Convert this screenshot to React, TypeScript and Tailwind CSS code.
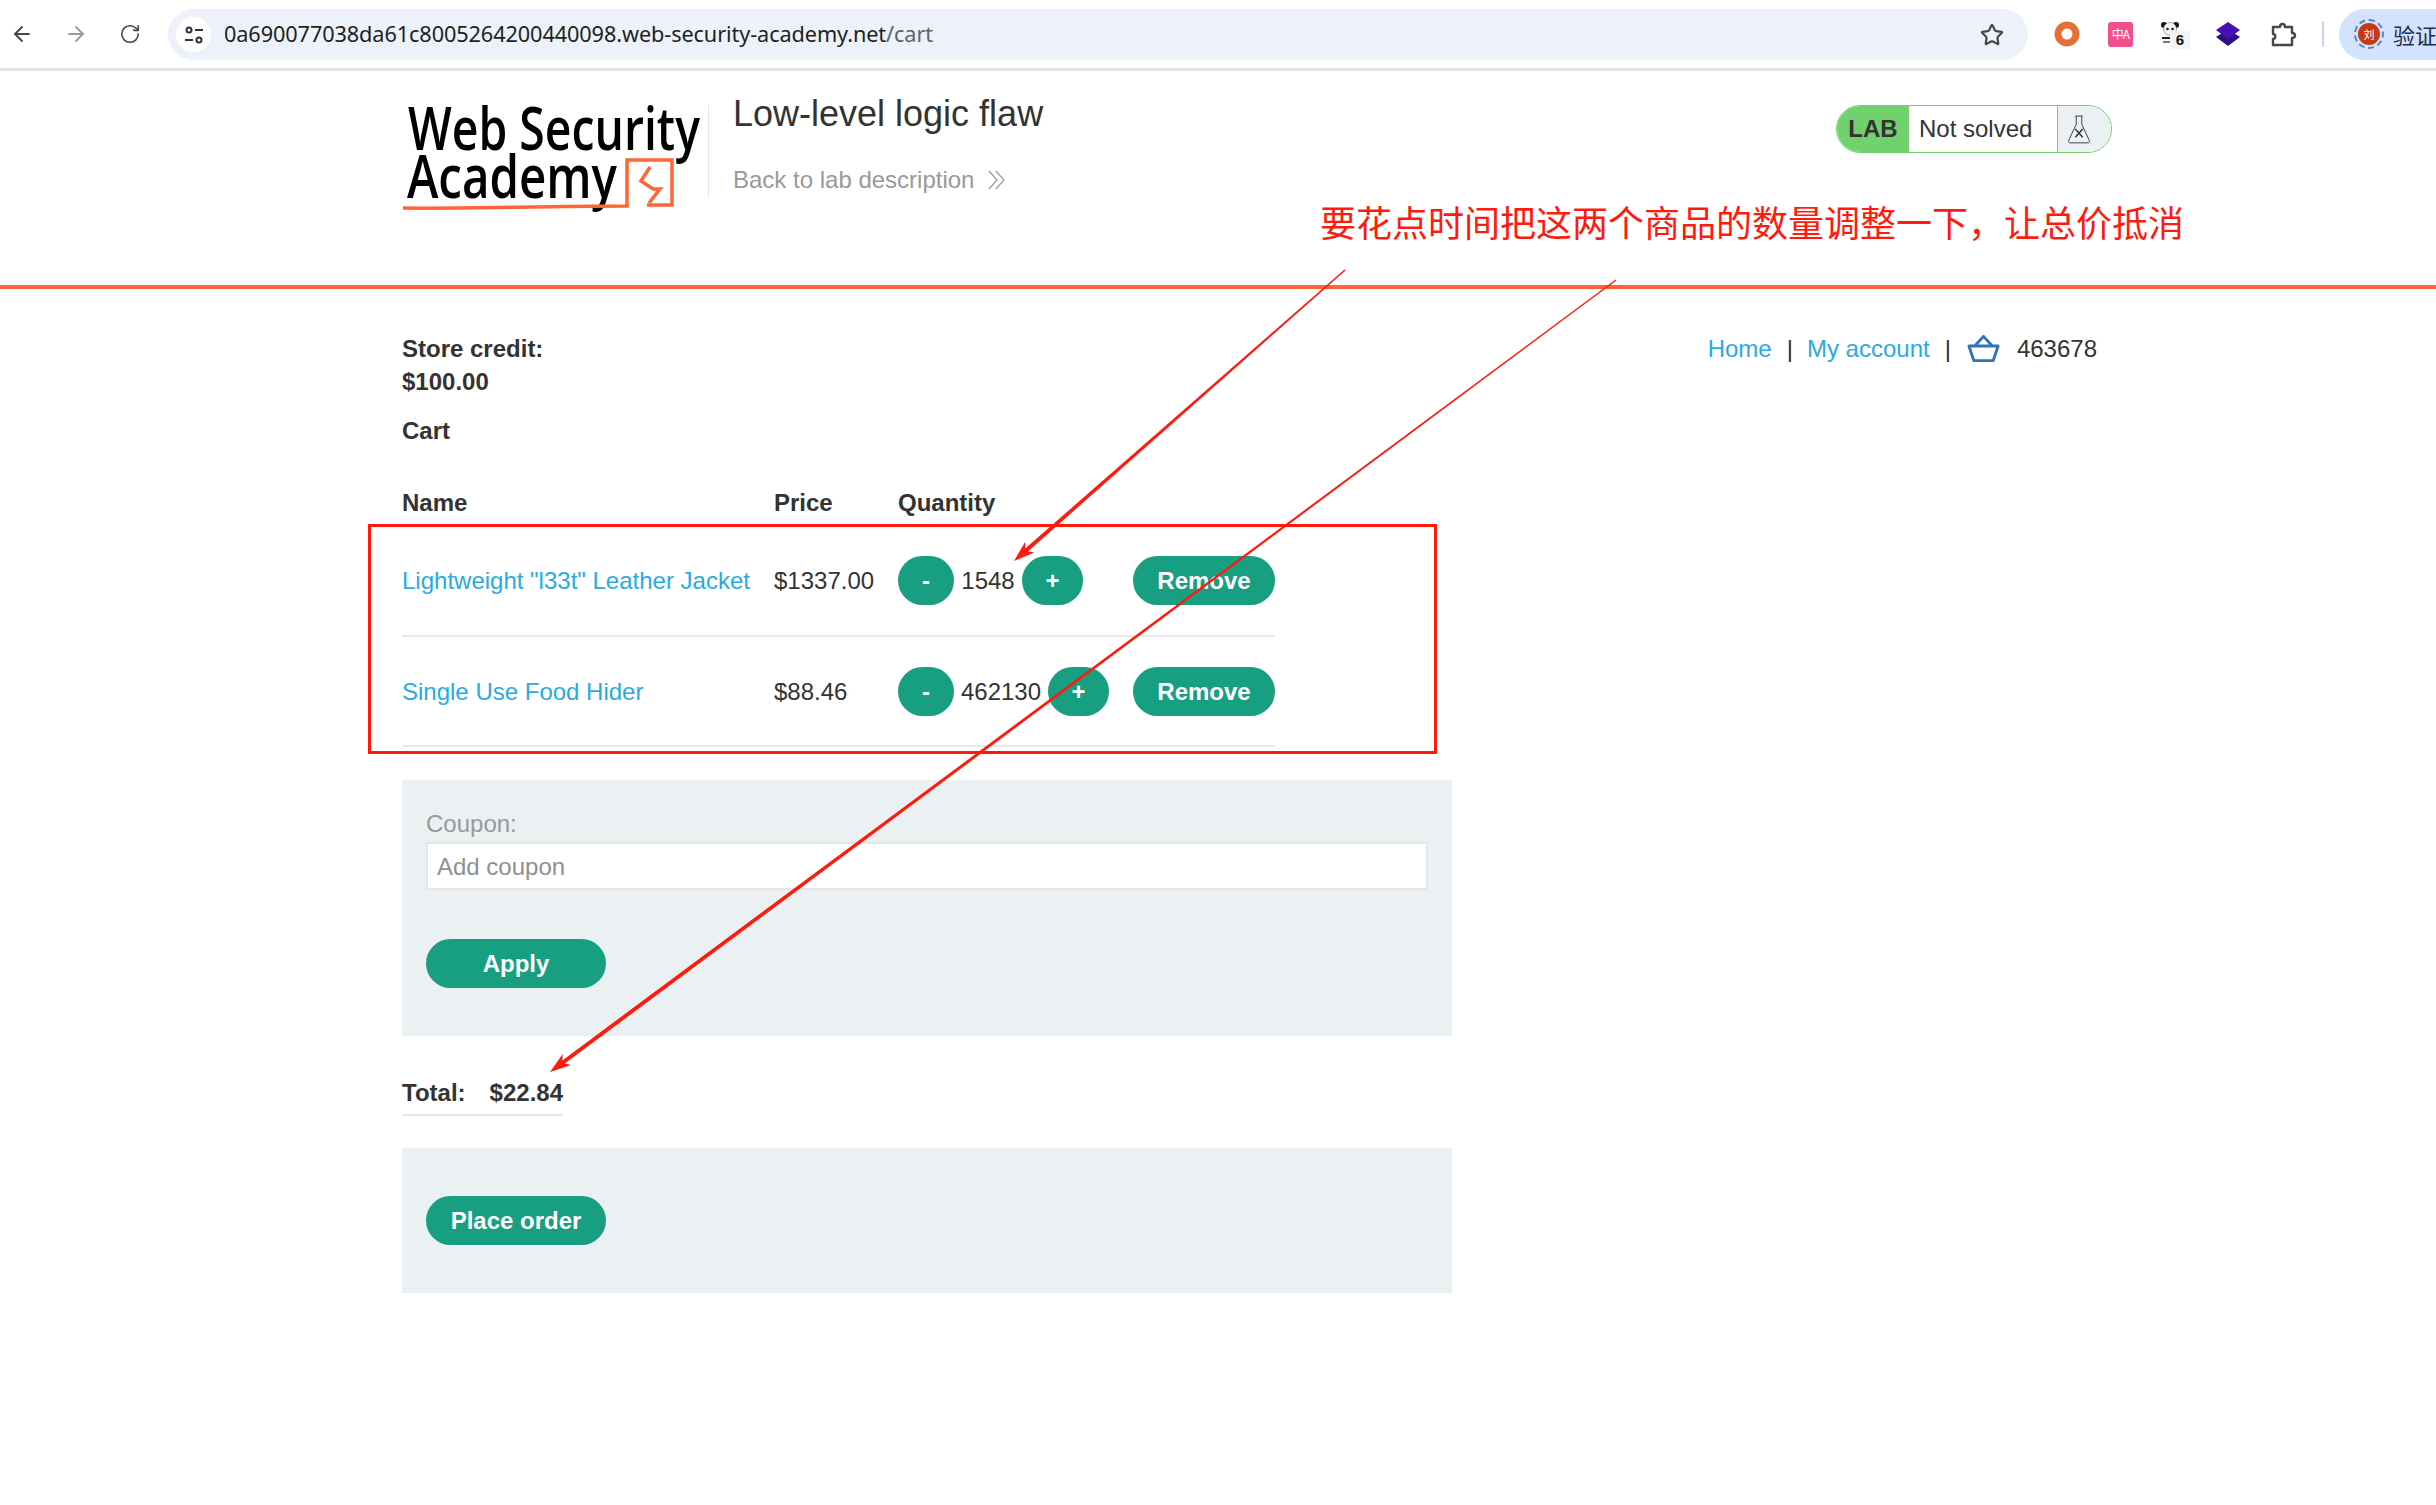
import React from "react";
import { ArrowLeft, ArrowRight, RotateCw, Star } from "lucide-react";

function Arrow({ x1, y1, x2, y2, w1, w2, head }: { x1: number; y1: number; x2: number; y2: number; w1: number; w2: number; head: number }) {
  const dx = x2 - x1;
  const dy = y2 - y1;
  const len = Math.hypot(dx, dy);
  const ux = dx / len;
  const uy = dy / len;
  const nx = -uy;
  const ny = ux;
  const bx = x2 - ux * head * 1.5;
  const by = y2 - uy * head * 1.5;
  const cx = x2 - ux * head * 1.2;
  const cy = y2 - uy * head * 1.2;
  const p = (a: number, b: number) => `${a.toFixed(1)},${b.toFixed(1)}`;
  const pts = [
    p(x1 + (nx * w1) / 2, y1 + (ny * w1) / 2),
    p(cx + (nx * w2) / 2, cy + (ny * w2) / 2),
    p(bx + (nx * head) / 2, by + (ny * head) / 2),
    p(x2, y2),
    p(bx - (nx * head) / 2, by - (ny * head) / 2),
    p(cx - (nx * w2) / 2, cy - (ny * w2) / 2),
    p(x1 - (nx * w1) / 2, y1 - (ny * w1) / 2),
  ].join(" ");
  return <polygon points={pts} fill="#ff1a0d" />;
}

function Pill({ className, children }: { className: string; children: React.ReactNode }) {
  return (
    <span className={`flex h-[49px] items-center justify-center rounded-[25px] bg-[#189e80] font-bold text-white ${className}`}>
      {children}
    </span>
  );
}

function BrowserBar() {
  return (
    <div className="flex h-[71px] items-start border-b-[3px] border-[#e3e3e3] bg-white">
      <div className="flex h-[68px] items-center pl-[10px]">
        <ArrowLeft className="h-[24px] w-[24px] text-[#474747]" strokeWidth={1.8} />
        <ArrowRight className="ml-[30px] h-[24px] w-[24px] text-[#9a9a9a]" strokeWidth={1.8} />
        <RotateCw className="ml-[31px] h-[22px] w-[22px] text-[#474747]" strokeWidth={1.8} />
      </div>
      <div className="ml-[27px] mt-[9px] flex h-[51px] w-[1860px] shrink-0 items-center rounded-full bg-[#ecf1fa] pl-[8px] pr-[24px]">
        <span className="flex h-[35px] w-[35px] items-center justify-center rounded-full bg-white">
          <svg width="20" height="20" viewBox="0 0 20 20" fill="none" stroke="#333" strokeWidth="2">
            <circle cx="5" cy="5" r="2.5" />
            <path d="M11 5h8M1 15h8" />
            <circle cx="15" cy="15" r="2.5" />
          </svg>
        </span>
        <span className="ml-[13px] flex-1 font-['Noto_Sans'] text-[21.7px] tracking-[-0.1px] text-[#1f1f1f]">
          0a690077038da61c8005264200440098.web-security-academy.net<span className="text-[#5f6368]">/cart</span>
        </span>
        <Star className="h-[24px] w-[24px] text-[#474747]" strokeWidth={2.2} />
      </div>
      <div className="flex h-[68px] flex-1 items-center">
        <svg className="ml-[26px]" width="26" height="26" viewBox="0 0 26 26">
          <circle cx="13" cy="13" r="9" fill="none" stroke="#e46f37" strokeWidth="7" />
        </svg>
        <span className="ml-[28px] flex h-[25px] w-[25px] items-center justify-center rounded-[3px] bg-[#f14f8e] font-['Noto_Sans_CJK_SC'] text-[12px] leading-none tracking-[-1px] text-white">
          中A
        </span>
        <span className="relative ml-[28px] h-[26px] w-[26px]">
          <svg width="18" height="22" viewBox="0 0 18 22" className="mt-[1px]">
            <circle cx="3" cy="3" r="3" fill="#111" />
            <circle cx="15" cy="3" r="3" fill="#111" />
            <circle cx="9" cy="7" r="6.5" fill="#f3f3f3" stroke="#555" strokeWidth="0.5" />
            <circle cx="6.5" cy="7" r="1.3" fill="#222" />
            <circle cx="11.5" cy="7" r="1.3" fill="#222" />
            <rect x="1" y="15" width="16" height="2" fill="#222" />
            <rect x="2" y="19" width="14" height="2" fill="#777" />
          </svg>
          <span className="absolute left-[9px] top-[10px] flex h-[18px] w-[20px] items-center justify-center rounded-[3px] bg-[#f3f3f3] text-[15px] font-bold text-[#111]">
            6
          </span>
        </span>
        <svg className="ml-[28px]" width="26" height="26" viewBox="0 0 26 26">
          <polygon points="13,8 25,16 13,25 1,16" fill="#2c0f80" />
          <polygon points="13,1 25,9 13,18 1,9" fill="#4a0fb0" />
        </svg>
        <svg className="ml-[30px]" width="26" height="26" viewBox="0 0 26 26" fill="none" stroke="#474747" strokeWidth="2.4" strokeLinejoin="round">
          <path d="M2 6h7c0-4 5-4 5 0h7v6c4 0 4 5 0 5v7H2v-6c3 0 3-5 0-5z" />
        </svg>
        <span className="ml-[25px] h-[26px] w-[2px] bg-[#c7d7f3]" />
        <div className="ml-[15px] flex h-[51px] min-w-0 flex-1 items-center overflow-hidden rounded-l-full bg-[#d3e3fd] pl-[15px]">
          <span className="flex h-[30px] w-[30px] shrink-0 items-center justify-center rounded-full border-2 border-dashed border-[#5d81b8] p-[2px]">
            <span className="flex h-[22px] w-[22px] items-center justify-center rounded-full bg-[#c53a12] font-['Noto_Sans_CJK_SC'] text-[11px] text-white">
              刘
            </span>
          </span>
          <span className="ml-[9px] whitespace-nowrap font-['Noto_Sans_CJK_SC'] text-[22px] text-[#1f2d4d]">验证身份</span>
        </div>
      </div>
    </div>
  );
}

function Logo() {
  return (
    <svg width="310" height="112" viewBox="0 0 310 112" className="shrink-0">
      <text x="8" y="46" fontFamily="'Open Sans'" fontWeight="600" fontSize="59" textLength="292" lengthAdjust="spacingAndGlyphs" fill="#000">
        Web Security
      </text>
      <text x="7" y="94" fontFamily="'Open Sans'" fontWeight="600" fontSize="59" textLength="210" lengthAdjust="spacingAndGlyphs" fill="#000">
        Academy
      </text>
      <path d="M3 104c60 1 140-2 224-2V56h45v45h-25" fill="none" stroke="#ff6633" strokeWidth="3.5" />
      <path d="M250 63l-9 14 12 8h7l-11 14" fill="none" stroke="#ff6633" strokeWidth="3.5" />
    </svg>
  );
}

function Header() {
  return (
    <div className="flex h-[218px] items-start border-b-4 border-[#ff6633] pl-[400px] pr-[324px]">
      <div className="mt-[33px]">
        <Logo />
      </div>
      <div className="ml-[-2px] mt-[34px] h-[93px] w-px bg-[#e6e6e6]" />
      <div className="ml-[24px] mt-[22px] flex-1">
        <div className="text-[36px] leading-[42px] text-[#333332]">Low-level logic flaw</div>
        <div className="mt-[29px] flex items-center text-[24px] leading-[32px] text-[#999]">
          Back to lab description
          <svg className="ml-[14px]" width="18" height="20" viewBox="0 0 18 20" fill="none" stroke="#999" strokeWidth="1.2">
            <path d="M1 1l8 9-8 9M8 1l8 9-8 9" />
          </svg>
        </div>
      </div>
      <div className="mt-[34px] flex h-[48px] w-[276px] items-stretch overflow-hidden rounded-full border-[1.5px] border-[#70d16d]">
        <span className="flex w-[72px] items-center justify-center bg-[#70d16d] text-[24px] font-bold text-[#333332]">LAB</span>
        <span className="flex flex-1 items-center pl-[10px] text-[24px] text-[#333332]">Not solved</span>
        <span className="flex w-[54px] items-center justify-start border-l-[1.5px] border-[#70d16d] bg-[#ebf0f2] pl-[9px]">
          <svg width="24" height="30" viewBox="0 0 26 32" fill="none" stroke="#333" strokeWidth="1">
            <path d="M9 2h8M10 2v9L2 28c-1 2 0 3 2 3h18c2 0 3-1 2-3L16 11V2" />
            <path d="M9 16l8 9M17 16l-8 9" strokeWidth="1.6" />
          </svg>
        </span>
      </div>
    </div>
  );
}

function Row({ name, price, qty, plusOffset }: { name: string; price: string; qty: string; plusOffset: string }) {
  return (
    <tr className="h-[110px] border-b-2 border-[#e9e9e9]">
      <td className="text-[#29abe2]">{name}</td>
      <td>{price}</td>
      <td>
        <div className="flex items-center">
          <Pill className="w-[56px] text-[24px]">-</Pill>
          <span className={`text-center ${plusOffset}`}>{qty}</span>
          <Pill className="w-[61px] text-[24px]">+</Pill>
        </div>
      </td>
      <td>
        <Pill className="w-[142px]">Remove</Pill>
      </td>
    </tr>
  );
}

function Main() {
  return (
    <div className="flex items-start justify-between pl-[402px] pr-[339px] pt-[43px] leading-[33px]">
      <div className="w-[1050px]">
        <div className="font-bold">Store credit:</div>
        <div className="font-bold">$100.00</div>
        <div className="mt-[16px] font-bold">Cart</div>
        <table className="mt-[31px] w-[873px] table-fixed border-collapse">
          <colgroup>
            <col className="w-[372px]" />
            <col className="w-[124px]" />
            <col className="w-[235px]" />
            <col className="w-[142px]" />
          </colgroup>
          <thead>
            <tr className="h-[48px] text-left">
              <th className="font-bold">Name</th>
              <th className="font-bold">Price</th>
              <th className="font-bold">Quantity</th>
              <th />
            </tr>
          </thead>
          <tbody>
            <Row name={'Lightweight "l33t" Leather Jacket'} price="$1337.00" qty="1548" plusOffset="w-[68px]" />
            <Row name="Single Use Food Hider" price="$88.46" qty="462130" plusOffset="w-[94px]" />
          </tbody>
        </table>
        <div className="mt-[33px] h-[256px] bg-[#ebf0f2] px-[24px] pt-[27px]">
          <div className="text-[#999]">Coupon:</div>
          <div className="mt-[2px] flex h-[48px] items-center border-2 border-[#e6e6e6] bg-white pl-[9px] text-[#8f8f8f]">Add coupon</div>
          <Pill className="mt-[49px] w-[180px]">Apply</Pill>
        </div>
        <div className="mt-[40px] flex h-[40px] w-[161px] justify-between border-b-2 border-[#e6e6e6] font-bold">
          <span>Total:</span>
          <span>$22.84</span>
        </div>
        <div className="mt-[32px] h-[145px] bg-[#ebf0f2] px-[24px] pt-[48px]">
          <Pill className="w-[180px]">Place order</Pill>
        </div>
      </div>
      <div className="flex items-center">
        <span className="text-[#29abe2]">Home</span>
        <span className="ml-[15px] mr-[14px]">|</span>
        <span className="text-[#29abe2]">My account</span>
        <span className="ml-[15px] mr-[16px]">|</span>
        <svg width="33" height="29" viewBox="0 0 34 29" fill="none" stroke="#2f74b8" strokeWidth="3" strokeLinejoin="round">
          <path d="M2 12h30l-5 15H7zM8 12l9-10 9 10" />
        </svg>
        <span className="ml-[17px]">463678</span>
      </div>
    </div>
  );
}

export default function App() {
  return (
    <div className="relative h-[1505px] w-full overflow-hidden bg-white font-['Liberation_Sans',Arial,sans-serif] text-[24px] text-[#333332]">
      <BrowserBar />
      <Header />
      <Main />
      <div className="absolute left-[1320px] top-[199px] whitespace-nowrap font-['Noto_Sans_CJK_SC',sans-serif] text-[36px] leading-[44px] text-[#ff1a0d]">
        要花点时间把这两个商品的数量调整一下，让总价抵消
      </div>
      <div className="pointer-events-none absolute left-[368px] top-[524px] h-[230px] w-[1069px] border-[3px] border-[#ff1a0d]" />
      <svg className="pointer-events-none absolute left-0 top-0" width="2436" height="1505" viewBox="0 0 2436 1505">
        <Arrow x1={1345} y1={270} x2={1014} y2={561} w1={1.5} w2={4} head={14} />
        <Arrow x1={1616} y1={280} x2={550} y2={1072} w1={1.2} w2={4} head={14} />
      </svg>
    </div>
  );
}
